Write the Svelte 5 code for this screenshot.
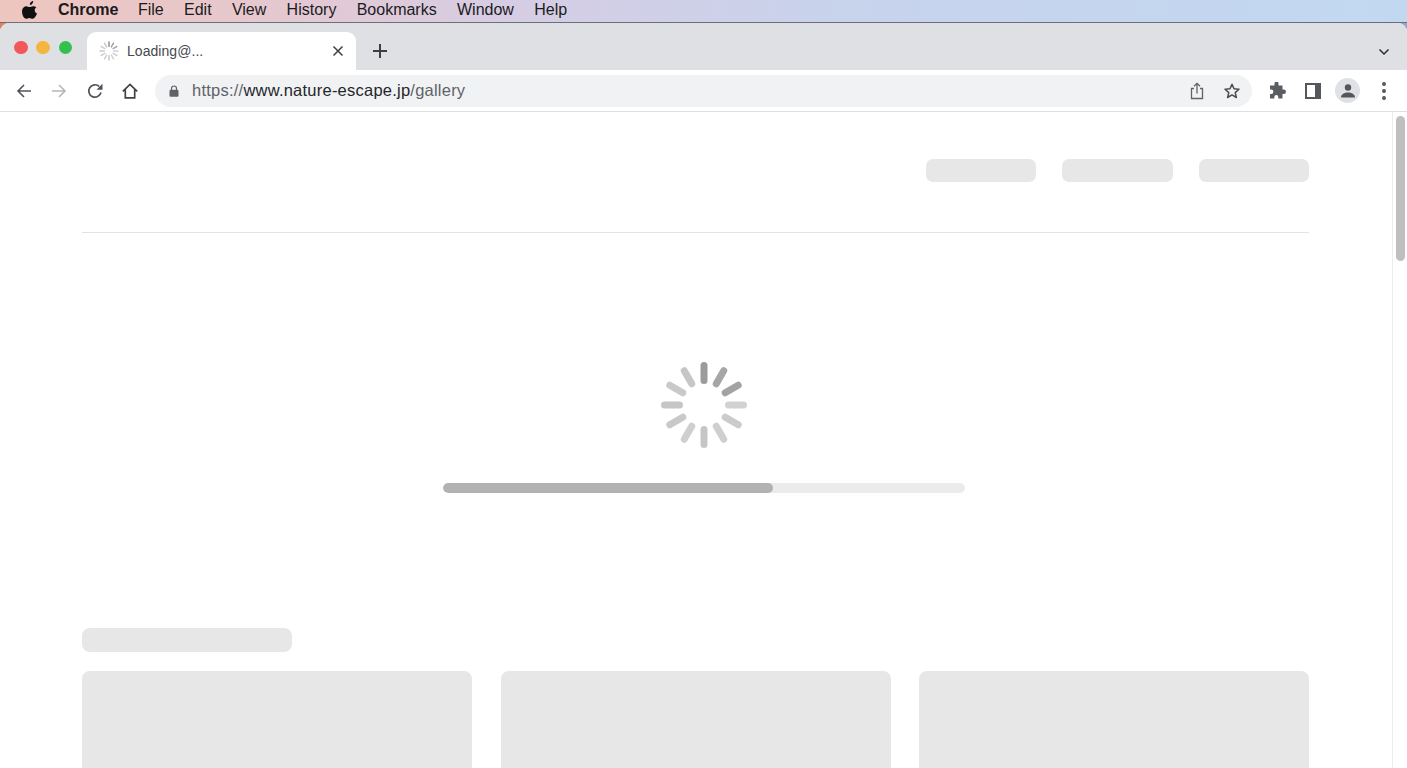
<script>
  const menus = ['File', 'Edit', 'View', 'History', 'Bookmarks', 'Window', 'Help'];
  const big = ['#9b9b9b','#a6a6a6','#a3a3a3','#d2d2d2','#cbcbcb','#cfcfcf','#c6c6c6','#cfcfcf','#c9c9c9','#c6c6c6','#c9c9c9','#c6c6c6'];
  const small = ['#8f8f8f','#a0a0a0','#a8a8a8','#cfcfcf','#cfcfcf','#cfcfcf','#c8c8c8','#cfcfcf','#cfcfcf','#c8c8c8','#cfcfcf','#c8c8c8'];
</script>

<div class="screen">
  <div class="menubar">
    <svg class="apple" viewBox="0 0 16 18" width="16" height="18"><path fill="#111" d="M11.2 0c.1 1-.3 2-.9 2.7-.6.8-1.6 1.3-2.500 1.200-.1-1 .4-2 .9-2.600C9.300.6 10.400 0 11.200 0zM14.500 6.200c-1.100.7-1.800 1.700-1.800 3 0 1.500.9 2.700 2.300 3.200-.3 1-.8 2-1.400 2.900-.8 1.200-1.700 2.400-3 2.400-1.300 0-1.700-.8-3.200-.8s-2 .8-3.200.8c-1.300 0-2.200-1.300-3.100-2.500C.4 13.500-.4 10.800.3 8.500c.6-1.900 2.100-3.300 4-3.300 1.300 0 2.400.9 3.200.9.800 0 2-.9 3.500-.9 1.500 0 2.700.6 3.500 1z"/></svg>
    <span class="brand">Chrome</span>
    {#each menus as m}<span class="menu">{m}</span>{/each}
  </div>

  <div class="window">
    <div class="tabstrip">
      <div class="lights"><i class="red"></i><i class="yellow"></i><i class="green"></i></div>
      <div class="tab">
        <svg class="favicon" viewBox="-10 -10 20 20" width="20" height="20">
          {#each small as c, i}
            <line x1="0" y1="-9" x2="0" y2="-4.800" stroke={c} stroke-width="1.500" stroke-linecap="round" transform="rotate({i * 30})" />
          {/each}
        </svg>
        <span class="tabtitle">Loading@...</span>
        <svg class="close" viewBox="0 0 12 12" width="12" height="12"><path d="M1.500 1.500l9 9M10.500 1.500l-9 9" stroke="#3c3f43" stroke-width="1.500" fill="none"/></svg>
      </div>
      <svg class="plus" viewBox="0 0 14 14" width="14" height="14"><path d="M7 0v14M0 7h14" stroke="#3c3f43" stroke-width="2" fill="none"/></svg>
      <svg class="chev" viewBox="0 0 12 8" width="12" height="8"><path d="M1.500 1.500L6 6l4.500-4.500" stroke="#2b2d30" stroke-width="1.500" fill="none"/></svg>
    </div>

    <div class="toolbar">
      <svg class="nav first" viewBox="0 0 16 16" width="16" height="16"><path d="M15 8H2M8 2L2 8l6 6" stroke="#50535a" stroke-width="1.600" fill="none"/></svg>
      <svg class="nav" viewBox="0 0 16 16" width="16" height="16"><path d="M1 8h13M8 2l6 6-6 6" stroke="#b4b6b9" stroke-width="1.600" fill="none"/></svg>
      <svg class="nav reload" viewBox="0 0 16 16" width="16" height="16"><path d="M14 9.500A6.200 6.200 0 1 1 12.300 3.500" stroke="#50535a" stroke-width="1.700" fill="none"/><path d="M15.500 0.800v6H9.500z" fill="#50535a"/></svg>
      <svg class="nav" viewBox="0 0 16 16" width="16" height="16"><path d="M0.800 8.300L8 1.500l7.200 6.800M3.300 6.500V14.800H12.700V6.500" stroke="#3f4246" stroke-width="1.700" fill="none"/></svg>
      <div class="omnibox">
        <svg class="lock" viewBox="0 0 10 12" width="10" height="12"><path d="M2.500 5V3.500a2.500 2.500 0 0 1 5 0V5" stroke="#5f6368" stroke-width="1.200" fill="none"/><rect x="0.500" y="4.800" width="9" height="7" rx="1.200" fill="#5f6368"/></svg>
        <span class="url"><span class="dim">https://</span>www.nature-escape.jp<span class="dim">/gallery</span></span>
        <svg class="share" viewBox="0 0 14 18" width="14" height="18"><path d="M4 6.500H1.500v10h11v-10H10M7 11.500V1.500M4 4.300L7 1.300l3 3" stroke="#5f6368" stroke-width="1.300" fill="none"/></svg>
        <svg class="star" viewBox="0 0 18 18" width="18" height="18"><path d="M9 2.200l2 4.600 5 .5-3.800 3.300 1.200 4.900L9 12.900l-4.400 2.600 1.200-4.900L2 7.300l5-.5z" stroke="#4a4d52" stroke-width="1.500" stroke-linejoin="round" fill="none"/></svg>
      </div>
      <svg class="ext" viewBox="0 0 18 18" width="18" height="18"><path fill="#5a5d62" d="M6.500 1.500a2 2 0 0 1 4 .3V3.500h4v4h1.300a2.200 2.200 0 0 1 0 4.400H14.500v4.500h-4.200v-1.300a2 2 0 0 0-4 0v1.300H2v-4.400h1.200a2.200 2.200 0 0 0 0-4.400H2V3.500h4.500z"/></svg>
      <svg class="side" viewBox="0 0 16 16" width="16" height="16"><path fill="#54575c" fill-rule="evenodd" d="M0 0h16v16H0zM2 2v12h8V2z"/></svg>
      <div class="avatar"><svg viewBox="0 0 16 14" width="16" height="14"><circle cx="8" cy="3.500" r="3.200" fill="#53565b"/><path d="M1 13.500c0-3.500 3.500-5 7-5s7 1.500 7 5z" fill="#53565b"/></svg></div>
      <div class="dots"><i></i><i></i><i></i></div>
    </div>

    <div class="viewport">
      <div class="page">
        <div class="navrow"><div class="sk pill"></div><div class="sk pill"></div><div class="sk pill"></div></div>
        <div class="rule"></div>
        <div class="loader">
          <svg class="spinner" viewBox="-44 -44 88 88" width="88" height="88">
            {#each big as c, i}
              <line x1="0" y1="-39.500" x2="0" y2="-24.500" stroke={c} stroke-width="7" stroke-linecap="round" transform="rotate({i * 30})" />
            {/each}
          </svg>
          <div class="progress"><div class="fill" style="width: 63.3%"></div></div>
        </div>
        <div class="sk heading"></div>
        <div class="cards"><div class="sk card"></div><div class="sk card"></div><div class="sk card"></div></div>
      </div>
      <div class="scrollbar"><div class="thumb"></div></div>
    </div>
  </div>
</div>

<style>
  :global(body) { margin: 0; overflow: hidden; }
  .screen {
    width: 1407px; height: 768px; overflow: hidden;
    display: flex; flex-direction: column;
    font-family: "Liberation Sans", Arial, sans-serif;
    background: linear-gradient(90deg, #d9825a 0%, #e4a58c 2%, #d6cde4 36%, #c8d3ec 60%, #8fa8c8 100%);
  }
  .menubar {
    height: 23px; flex: none; display: flex; align-items: center; box-sizing: border-box;
    padding-left: 22px; font-size: 16px; color: #1b1b1e;
    border-bottom: 1px solid #6a6f78;
    background: linear-gradient(90deg, #eec6bf 0%, #e6c8ce 18%, #d6cde4 36%, #c8d3ec 60%, #c2d8f1 100%);
  }
  .apple { margin-right: 20px; margin-top: -3px; }
  .brand { font-weight: 700; margin-right: 19.500px; position: relative; top: -1px; }
  .menu { margin-right: 20.300px; position: relative; top: -1px; }
  .window {
    flex: 1; min-height: 0; display: flex; flex-direction: column;
    border-radius: 9px 9px 0 0; overflow: hidden; background: #fff;
  }
  .tabstrip {
    height: 47px; flex: none; display: flex; align-items: flex-end;
    background: #dfe0e4; position: relative;
  }
  .lights {
    display: flex; gap: 8.800px; margin-left: 14px; width: 73px; height: 47px;
    padding-top: 2px; box-sizing: border-box; align-items: center;
  }
  .lights i { width: 13.500px; height: 13.500px; border-radius: 50%; display: block; }
  .red { background: #f2575a; }
  .yellow { background: #f5b63f; }
  .green { background: #33c04f; }
  .tab {
    width: 269px; height: 38px; background: #fff; border-radius: 9px 9px 0 0;
    display: flex; align-items: center; padding-left: 12px; box-sizing: border-box;
  }
  .favicon { flex: none; margin-right: 8px; }
  .tabtitle { font-size: 14px; letter-spacing: 0.050px; color: #46494e; flex: 1; }
  .close { margin-right: 12px; }
  .plus { margin-left: 17px; margin-bottom: 12px; }
  .chev { position: absolute; right: 17px; top: 25px; }
  .toolbar {
    height: 41px; flex: none; display: flex; align-items: center; background: #fff;
    border-bottom: 1px solid #dedfe1;
  }
  .nav { flex: none; margin-left: 19px; }
  .nav.first { margin-left: 16px; }
  .nav.reload { margin-left: 20px; }
  .omnibox {
    width: 1097px; height: 32px; margin-left: 17px; border-radius: 16px;
    background: #f1f2f4; display: flex; align-items: center; flex: none;
    padding-left: 14px; box-sizing: border-box;
  }
  .lock { flex: none; }
  .url { margin-left: 13px; font-size: 16.500px; letter-spacing: 0.230px; color: #24262a; flex: 1; }
  .dim { color: #5f6368; }
  .share { margin-right: 19px; }
  .star { margin-right: 11px; }
  .ext { margin-left: 16px; flex: none; }
  .side { margin-left: 19px; flex: none; }
  .avatar {
    width: 25px; height: 25px; margin-left: 14px; border-radius: 50%; background: #dfe1e6;
    display: flex; align-items: center; justify-content: center; flex: none;
  }
  .dots { margin-left: 22px; display: flex; flex-direction: column; gap: 3px; }
  .dots i { width: 4px; height: 4px; border-radius: 50%; background: #54575c; display: block; }
  .viewport { flex: 1; min-height: 0; display: flex; }
  .page { flex: 1; padding: 47px 83px 0 82px; min-width: 0; }
  .sk { background: #e7e7e7; }
  .navrow { display: flex; justify-content: flex-end; gap: 26px; }
  .pill { width: 110.500px; height: 23px; border-radius: 7px; }
  .rule { height: 1px; background: #e3e3e3; margin-top: 50px; }
  .loader { display: flex; flex-direction: column; align-items: center; height: 395px; }
  .spinner { margin-top: 128px; margin-left: 16px; }
  .progress { width: 522px; height: 10px; margin-top: 34px; margin-left: 16px; border-radius: 5px; background: #ebebeb; overflow: hidden; }
  .fill { height: 100%; background: #b2b2b2; border-radius: 5px; }
  .heading { width: 210px; height: 24px; border-radius: 8px; }
  .cards { display: grid; grid-template-columns: repeat(3, 1fr); gap: 28.500px; margin-top: 19px; }
  .card { height: 120px; border-radius: 8px 8px 0 0; }
  .scrollbar { width: 15px; flex: none; border-left: 1px solid #ececec; box-sizing: border-box; padding: 4px 2px 0 3px; }
  .thumb { height: 145px; border-radius: 5px; background: #bfbfbf; }
</style>
